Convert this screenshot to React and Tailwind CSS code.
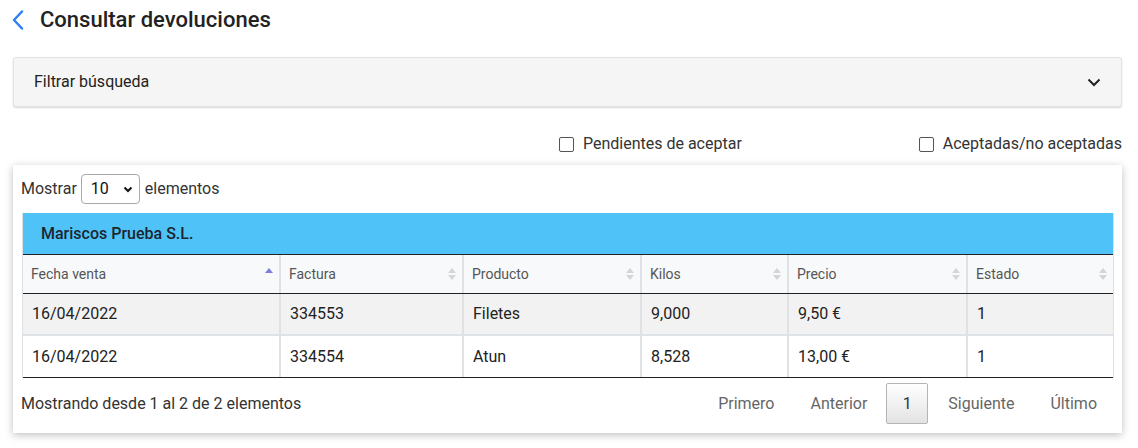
import React from "react";

function SortIcon({ active }) {
  return (
    <svg width="8" height="14" viewBox="0 0 8 14" className="shrink-0">
      <path d="M0 6 L4 1 L8 6 Z" fill={active ? "#7c7fd9" : "#d3d5d8"} />
      {!active && <path d="M0 8 L4 13 L8 8 Z" fill="#d3d5d8" />}
    </svg>
  );
}

function Checkbox({ label }) {
  return (
    <label className="flex items-center gap-[9px]">
      <span className="w-[15px] h-[15px] border-[1.5px] border-[#555] rounded-[2px] bg-white" />
      <span className="text-[16px] text-[#333]">{label}</span>
    </label>
  );
}

const cols = [
  { label: "Fecha venta", w: "w-[258px]", active: true },
  { label: "Factura", w: "w-[183px]" },
  { label: "Producto", w: "w-[178px]" },
  { label: "Kilos", w: "w-[147px]" },
  { label: "Precio", w: "w-[179px]" },
  { label: "Estado", w: "flex-1" },
];

const rows = [
  ["16/04/2022", "334553", "Filetes", "9,000", "9,50 €", "1"],
  ["16/04/2022", "334554", "Atun", "8,528", "13,00 €", "1"],
];

export default function App() {
  return (
    <div className="w-[1138px] h-[448px] bg-white overflow-hidden text-[#212529]" style={{ fontFamily: "Roboto, 'Liberation Sans', sans-serif" }}>
      <div className="flex items-center h-[38px] pl-[12px] pt-[1px]">
        <svg width="12" height="20" viewBox="0 0 12 20" className="mr-[16px]">
          <path d="M10 1.5 L2 10 L10 18.5" fill="none" stroke="#2f7ff0" strokeWidth="2.5" strokeLinecap="round" strokeLinejoin="round" />
        </svg>
        <h1 className="text-[22px] font-medium text-[#222]">Consultar devoluciones</h1>
      </div>

      <div className="ml-[13px] mt-[19px] w-[1109px] h-[50px] bg-[#f5f5f5] border border-[#e3e3e3] rounded-[3px] shadow-[0_1px_2px_rgba(0,0,0,0.15)] flex items-center justify-between pl-[20px] pr-[20px]">
        <span className="text-[16px] text-[#222]">Filtrar búsqueda</span>
        <svg width="14" height="9" viewBox="0 0 14 9">
          <path d="M1.5 1.5 L7 7 L12.5 1.5" fill="none" stroke="#222" strokeWidth="2" />
        </svg>
      </div>

      <div className="flex justify-end items-center w-[1122px] mt-[27px] h-[20px]">
        <div className="mr-[177px]">
          <Checkbox label="Pendientes de aceptar" />
        </div>
        <Checkbox label="Aceptadas/no aceptadas" />
      </div>

      <div className="ml-[13px] mt-[11px] w-[1109px] h-[268px] bg-white shadow-[0_2px_8px_rgba(0,0,0,0.25)] px-[8px] pt-[9px]">
        <div className="flex items-center h-[30px] text-[16px] text-[#333]">
          <span>Mostrar</span>
          <div className="ml-[4px] w-[59px] h-[30px] border border-[#a9a9a9] rounded-[4px] flex items-center justify-between pl-[9px] pr-[6px]">
            <span className="text-[16px] text-[#111]">10</span>
            <svg width="10" height="7" viewBox="0 0 10 7">
              <path d="M1.5 1.5 L5 5 L8.5 1.5" fill="none" stroke="#111" strokeWidth="2" />
            </svg>
          </div>
          <span className="ml-[5px]">elementos</span>
        </div>

        <div className="ml-[1px] mt-[9px] w-[1092px] border-x border-[#dee2e6]">
          <div className="h-[42px] bg-[#4fc3f7] border-b border-[#222] flex items-center pl-[18px] text-[16px] font-medium text-[#1c2530]">
            Mariscos Prueba S.L.
          </div>
          <div className="flex h-[39px] bg-[#f8f9fa] border-b border-[#222]">
            {cols.map((c, i) => (
              <div key={i} className={`${c.w} ${i < cols.length - 1 ? "border-r-2 border-[#dee2e6]" : ""} flex items-center justify-between pl-[8px] pr-[6px] text-[14px] text-[#555]`}>
                <span>{c.label}</span>
                <SortIcon active={c.active} />
              </div>
            ))}
          </div>
          {rows.map((r, ri) => (
            <div key={ri} className={`flex h-[42px] ${ri === 0 ? "bg-[#f2f2f2] border-b-2 border-[#dee2e6]" : "bg-white border-b border-[#222]"}`}>
              {r.map((v, i) => (
                <div key={i} className={`${cols[i].w} ${i < cols.length - 1 ? "border-r-2 border-[#dee2e6]" : ""} flex items-center pl-[9px] text-[16px] text-[#222]`}>
                  {v}
                </div>
              ))}
            </div>
          ))}
        </div>

        <div className="flex items-center justify-between mt-[5px] h-[41px]">
          <span className="text-[16px] text-[#333]">Mostrando desde 1 al 2 de 2 elementos</span>
          <div className="flex items-center text-[16px] text-[#666] mr-[-1px]">
            <span className="px-[18px]">Primero</span>
            <span className="px-[18px] mr-[1px]">Anterior</span>
            <span className="w-[42px] h-[41px] border border-[#b5b5b5] rounded-[2px] bg-gradient-to-b from-[#ffffff] to-[#e3e3e3] flex items-center justify-center text-[#333]">1</span>
            <span className="px-[18px] ml-[2px]">Siguiente</span>
            <span className="px-[18px]">Último</span>
          </div>
        </div>
      </div>
    </div>
  );
}
